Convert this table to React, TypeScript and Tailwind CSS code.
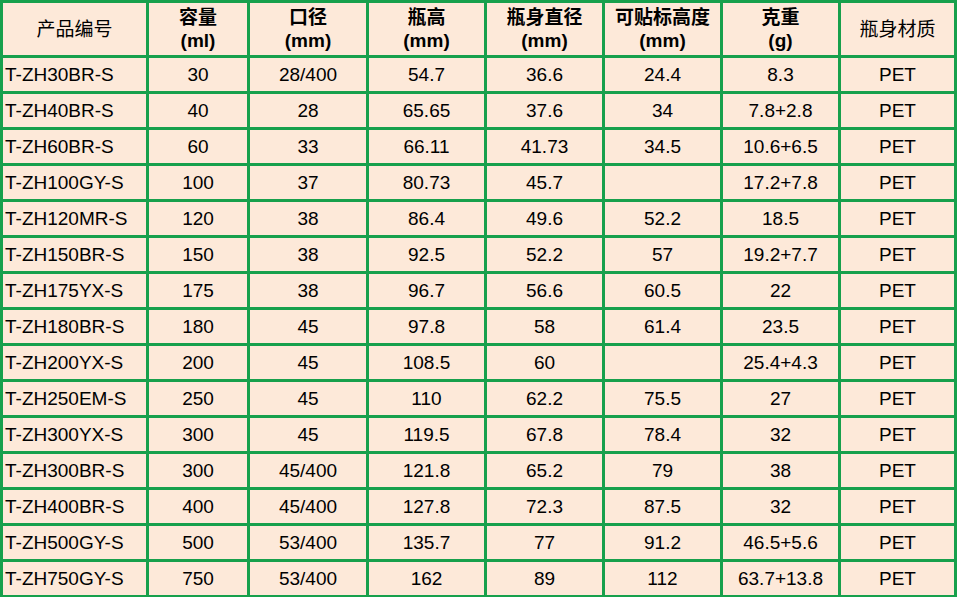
const headers: { lines: string[]; bold: boolean }[] = [
  { lines: ['产品编号'], bold: false },
  { lines: ['容量', '(ml)'], bold: true },
  { lines: ['口径', '(mm)'], bold: true },
  { lines: ['瓶高', '(mm)'], bold: true },
  { lines: ['瓶身直径', '(mm)'], bold: true },
  { lines: ['可贴标高度', '(mm)'], bold: true },
  { lines: ['克重', '(g)'], bold: true },
  { lines: ['瓶身材质'], bold: false },
]

const rows: string[][] = [
  ['T-ZH30BR-S', '30', '28/400', '54.7', '36.6', '24.4', '8.3', 'PET'],
  ['T-ZH40BR-S', '40', '28', '65.65', '37.6', '34', '7.8+2.8', 'PET'],
  ['T-ZH60BR-S', '60', '33', '66.11', '41.73', '34.5', '10.6+6.5', 'PET'],
  ['T-ZH100GY-S', '100', '37', '80.73', '45.7', '', '17.2+7.8', 'PET'],
  ['T-ZH120MR-S', '120', '38', '86.4', '49.6', '52.2', '18.5', 'PET'],
  ['T-ZH150BR-S', '150', '38', '92.5', '52.2', '57', '19.2+7.7', 'PET'],
  ['T-ZH175YX-S', '175', '38', '96.7', '56.6', '60.5', '22', 'PET'],
  ['T-ZH180BR-S', '180', '45', '97.8', '58', '61.4', '23.5', 'PET'],
  ['T-ZH200YX-S', '200', '45', '108.5', '60', '', '25.4+4.3', 'PET'],
  ['T-ZH250EM-S', '250', '45', '110', '62.2', '75.5', '27', 'PET'],
  ['T-ZH300YX-S', '300', '45', '119.5', '67.8', '78.4', '32', 'PET'],
  ['T-ZH300BR-S', '300', '45/400', '121.8', '65.2', '79', '38', 'PET'],
  ['T-ZH400BR-S', '400', '45/400', '127.8', '72.3', '87.5', '32', 'PET'],
  ['T-ZH500GY-S', '500', '53/400', '135.7', '77', '91.2', '46.5+5.6', 'PET'],
  ['T-ZH750GY-S', '750', '53/400', '162', '89', '112', '63.7+13.8', 'PET'],
]

export default function App() {
  return (
    <div className="w-[958px] h-[597px] overflow-hidden bg-white">
      <div
        className="grid w-[957px] grid-cols-[143px_98px_116px_115px_115px_115px_115px_113px] grid-rows-[52px_repeat(15,33px)] gap-[3px] bg-[#17a04c] p-[3px] text-[19px] leading-[23px] text-black"
        style={{ fontFamily: '"Liberation Sans", Arial, "Noto Sans CJK SC", sans-serif' }}
      >
        {headers.map((h, i) => (
          <div
            key={i}
            className={`flex flex-col items-center justify-center bg-[#fde9d9] text-center ${
              h.bold ? 'font-bold' : 'font-normal'
            }`}
          >
            {h.lines.map((l, j) => (
              <span key={j}>{l}</span>
            ))}
          </div>
        ))}
        {rows.map((r, ri) =>
          r.map((c, ci) => (
            <div
              key={`${ri}-${ci}`}
              className={`flex items-center bg-[#fde9d9] ${
                ci === 0 ? 'justify-start pl-[2px]' : 'justify-center'
              }`}
            >
              {c}
            </div>
          ))
        )}
      </div>
    </div>
  )
}
